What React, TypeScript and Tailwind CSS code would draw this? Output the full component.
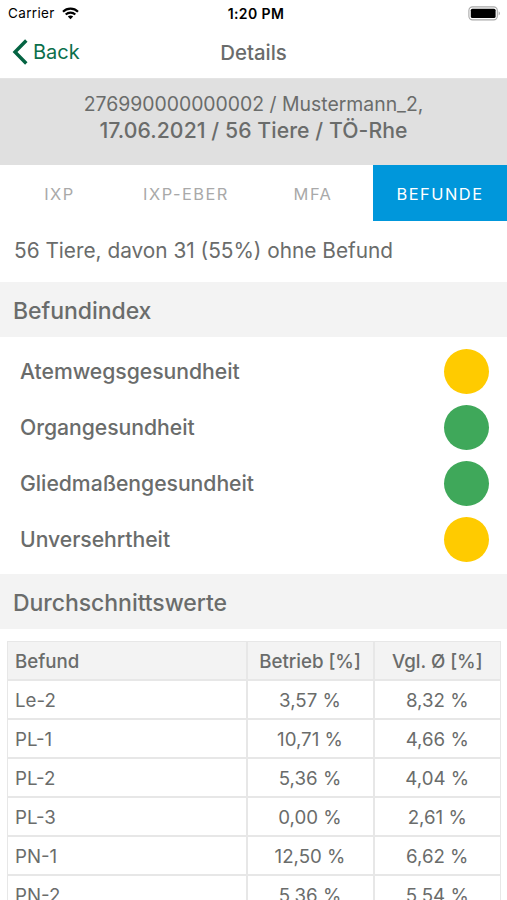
const tabs = [
  { label: "IXP", className: "w-[119px]" },
  { label: "IXP-EBER", className: "w-[134px]" },
  { label: "MFA", className: "w-[120px]" },
];

const indices = [
  { name: "Atemwegsgesundheit", color: "bg-[#ffcb00]" },
  { name: "Organgesundheit", color: "bg-[#3fa85a]" },
  { name: "Gliedmaßengesundheit", color: "bg-[#3fa85a]" },
  { name: "Unversehrtheit", color: "bg-[#ffcb00]" },
];

const averages = [
  ["Le-2", "3,57 %", "8,32 %"],
  ["PL-1", "10,71 %", "4,66 %"],
  ["PL-2", "5,36 %", "4,04 %"],
  ["PL-3", "0,00 %", "2,61 %"],
  ["PN-1", "12,50 %", "6,62 %"],
  ["PN-2", "5,36 %", "5,54 %"],
];

const StatusBar = () => {
  return (
    <div className="grid grid-cols-3 items-center h-[27px] pl-2 pr-[6px] text-[13.5px] text-black">
      <div className="flex items-center gap-[7px]">
        <span className="tracking-[0.35px]">Carrier</span>
        <svg width="17" height="13" viewBox="0 0 17 13" fill="none" stroke="#000" strokeWidth="2.1" aria-hidden="true">
          <path d="M1 4.8C5.1 .6 11.9 .6 16 4.8" />
          <path d="M3.7 7.6C6.4 5 10.6 5 13.3 7.6" />
          <path d="M8.5 12.3L5.8 9.6C7.3 8.2 9.7 8.2 11.2 9.6Z" fill="#000" stroke="none" />
        </svg>
      </div>
      <span className="pl-[3px] text-center text-[14px] font-semibold tracking-[0.4px] whitespace-nowrap">1:20 PM</span>
      <svg className="justify-self-end" width="33" height="15" viewBox="0 0 33 15" aria-hidden="true">
        <rect x=".9" y=".9" width="28.4" height="13" rx="3.6" fill="none" stroke="#a8a8a8" strokeWidth="1.1" />
        <rect x="2.8" y="2.7" width="24.8" height="9.4" rx="1.6" fill="#000" />
        <path d="M30.7 5.2Q33 7.4 30.7 9.6Z" fill="#a0a0a0" />
      </svg>
    </div>
  );
};

const NavBar = () => {
  return (
    <nav className="grid grid-cols-3 items-center h-[52px] pl-3 pb-[2px] border-b border-[#e4e4e4]">
      <button className="flex items-center gap-[5px] text-[#0b6f4b]" aria-label="Back">
        <svg width="16" height="26" viewBox="0 0 16 26" fill="none" stroke="#046342" strokeWidth="3.4" aria-hidden="true">
          <path d="M14.3 1.5L3 13L14.3 24.5" />
        </svg>
        <span className="text-[20px]">Back</span>
      </button>
      <h1 className="pt-[3px] pr-3 text-center text-[20.4px] font-medium">Details</h1>
    </nav>
  );
};

const SectionTitle = ({ title }: { title: string }) => {
  return (
    <h2 className="flex items-center h-[55px] pl-[13px] pt-[3px] bg-[#f3f3f3] text-[23px] font-medium tracking-[-0.05px]">
      {title}
    </h2>
  );
};

const App = () => {
  return (
    <main className="w-[507px] h-[900px] overflow-hidden bg-white font-['Inter','Liberation_Sans',sans-serif] text-[#6a6c6b]">
      <StatusBar />
      <NavBar />
      <header className="h-[86px] pt-3 bg-[#e0e0e0] text-center leading-[26px]">
        <p className="text-[19.4px]">276990000000002 / Mustermann_2,</p>
        <p className="text-[21.2px] font-medium tracking-[0.08px]">17.06.2021 / 56 Tiere / TÖ-Rhe</p>
      </header>
      <div className="flex h-14 text-[16.4px] tracking-[1.5px]" role="tablist">
        {tabs.map((tab) => (
          <button key={tab.label} role="tab" className={`${tab.className} pt-[2px] text-[#a9a9a9]`}>
            {tab.label}
          </button>
        ))}
        <button role="tab" aria-selected className="w-[134px] pt-[2px] bg-[#0097db] text-white">
          BEFUNDE
        </button>
      </div>
      <p className="flex items-center h-[61px] pl-[14px] pb-px text-[20.8px]">
        56 Tiere, davon 31 (55%) ohne Befund
      </p>
      <SectionTitle title="Befundindex" />
      <ul className="h-[237px] pt-[6px]">
        {indices.map((item) => (
          <li key={item.name} className="flex items-center justify-between h-[56.25px] pl-5 pr-[18px]">
            <span className="pt-px text-[21.2px] font-medium tracking-[-0.04px]">{item.name}</span>
            <span className={`size-[45px] rounded-full ${item.color}`} />
          </li>
        ))}
      </ul>
      <SectionTitle title="Durchschnittswerte" />
      <table className="w-[493px] mt-3 ml-[7px] table-fixed border-collapse border border-[#e7e7e7] text-[18.7px] leading-6">
        <colgroup>
          <col className="w-[239px]" />
          <col className="w-[127px]" />
          <col className="w-[127px]" />
        </colgroup>
        <thead>
          <tr className="h-[38px] bg-[#f3f3f3] border-b-2 border-[#e7e7e7]">
            <th className="pl-[7px] pt-[4px] text-left font-medium">Befund</th>
            <th className="pt-[4px] border-l-2 border-[#e7e7e7] font-medium">Betrieb [%]</th>
            <th className="pt-[4px] border-l-2 border-[#e7e7e7] font-medium">Vgl. Ø [%]</th>
          </tr>
        </thead>
        <tbody>
          {averages.map(([name, own, other]) => (
            <tr key={name} className="h-[39px] border-b-2 border-[#e7e7e7]">
              <td className="pl-[7px] pt-[4px]">{name}</td>
              <td className="pt-[4px] border-l-2 border-[#e7e7e7] text-center">{own}</td>
              <td className="pt-[4px] border-l-2 border-[#e7e7e7] text-center">{other}</td>
            </tr>
          ))}
        </tbody>
      </table>
    </main>
  );
};

export default App;
